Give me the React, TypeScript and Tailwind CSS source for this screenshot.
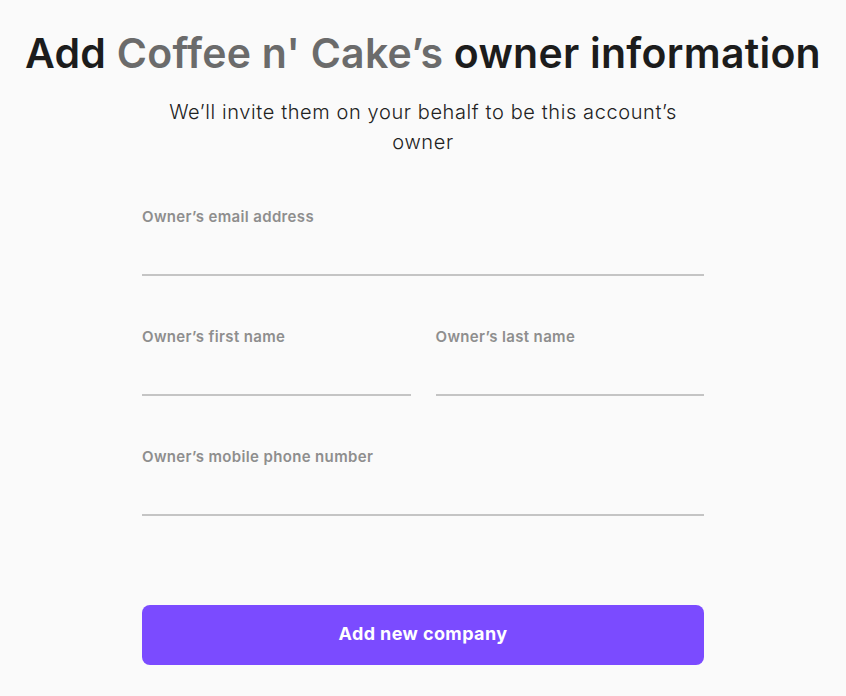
const fields = {
  label: "text-[15px] font-semibold text-[#8e8e8e] leading-5 tracking-[0.35px]",
  line: "mt-[47px] h-[2px] bg-[#c4c4c4]",
};

const Field = ({ label }: { label: string }) => (
  <div className="flex-1">
    <div className={fields.label}>{label}</div>
    <div className={fields.line} />
  </div>
);

export default function App() {
  return (
    <div
      className="min-h-[696px] w-full bg-[#fafafa] text-[#1c1c1c]"
      style={{ fontFamily: "Inter, 'Noto Sans', sans-serif" }}
    >
      <div className="flex flex-col items-center pt-[27px]">
        <h1 className="text-[41px] font-semibold leading-[52px] tracking-[0.25px] whitespace-nowrap">
          Add <span className="text-[#6b6b6b]">Coffee n' Cake’s</span> owner information
        </h1>
        <p className="mt-[18px] w-[540px] text-center text-[20px] font-light leading-[30px] tracking-[0.6px] text-[#222]">
          We’ll invite them on your behalf to be this account’s owner
        </p>
      </div>

      <div className="mx-auto mt-[50px] w-[562px]">
        <Field label="Owner’s email address" />
        <div className="mt-[51px] flex gap-[25px]">
          <Field label="Owner’s first name" />
          <Field label="Owner’s last name" />
        </div>
        <div className="mt-[51px]">
          <Field label="Owner’s mobile phone number" />
        </div>
        <button className="mt-[89px] flex h-[60px] w-full items-center justify-center rounded-lg bg-[#7b4bff] pb-[3px] text-[18px] font-bold tracking-[0.4px] text-white">
          Add new company
        </button>
      </div>
    </div>
  );
}
